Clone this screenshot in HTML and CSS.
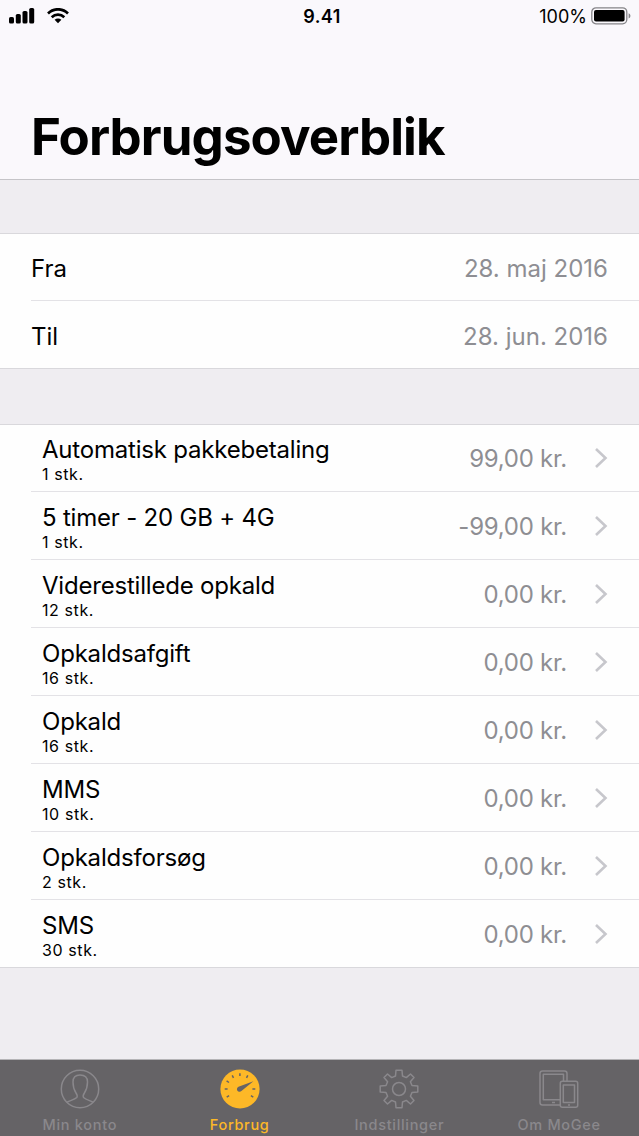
FILE: index.html
```html
<!DOCTYPE html>
<html lang="da">
<head>
    <meta charset="UTF-8">
    <meta name="viewport" content="width=device-width, initial-scale=1.0">
    <title>Forbrugsoverblik</title>
    <link rel="stylesheet" href="styles.css">
</head>
<body>
    <div class="app">
        <header class="header">
            <div class="status-bar">
                <div class="status-left">
                    <svg class="signal" width="26" height="16" viewBox="0 0 26 16">
                        <rect x="0" y="9" width="5" height="6.5" rx="1.6"/>
                        <rect x="6.8" y="6" width="5" height="9.5" rx="1.6"/>
                        <rect x="13.5" y="3" width="5" height="12.5" rx="1.6"/>
                        <rect x="20.2" y="0" width="5" height="15.5" rx="1.6"/>
                    </svg>
                    <svg class="wifi" width="22" height="16" viewBox="0 0 22 16">
                        <path d="M1 5.4C6.8-.1 15.2-.1 21 5.4M4.7 9.2C8.3 5.8 13.7 5.8 17.3 9.2" fill="none" stroke="#000" stroke-width="2.7"/>
                        <path d="M7.6 11.8C9.5 10.1 12.5 10.1 14.4 11.8L11 15.2Z"/>
                    </svg>
                </div>
                <div class="time">9.41</div>
                <div class="status-right">
                    <span class="percent">100%</span>
                    <svg width="41" height="18" viewBox="0 0 41 18">
                        <rect x=".8" y=".8" width="35" height="16" rx="4.2" fill="none" stroke="#858488" stroke-width="1.3"/>
                        <rect x="3" y="3" width="30.6" height="11.6" rx="2"/>
                        <path d="M37.6 6.2C40 7 40 10.6 37.6 11.4Z" fill="#858488"/>
                    </svg>
                </div>
            </div>
            <h1>Forbrugsoverblik</h1>
        </header>

        <main>
            <section class="group dates">
                <div class="row"><span>Fra</span><span class="value">28. maj 2016</span></div>
                <div class="row"><span>Til</span><span class="value">28. jun. 2016</span></div>
            </section>

            <section class="group usage">
                <div class="row">
                    <div class="info"><div class="name">Automatisk pakkebetaling</div><div class="count">1 stk.</div></div>
                    <span class="value">99,00 kr.</span>
                    <svg class="arrow" width="14" height="22" viewBox="0 0 14 22"><path d="M2 2L11.5 11L2 20"/></svg>
                </div>
                <div class="row">
                    <div class="info"><div class="name">5 timer - 20 GB + 4G</div><div class="count">1 stk.</div></div>
                    <span class="value">-99,00 kr.</span>
                    <svg class="arrow" width="14" height="22" viewBox="0 0 14 22"><path d="M2 2L11.5 11L2 20"/></svg>
                </div>
                <div class="row">
                    <div class="info"><div class="name">Viderestillede opkald</div><div class="count">12 stk.</div></div>
                    <span class="value">0,00 kr.</span>
                    <svg class="arrow" width="14" height="22" viewBox="0 0 14 22"><path d="M2 2L11.5 11L2 20"/></svg>
                </div>
                <div class="row">
                    <div class="info"><div class="name">Opkaldsafgift</div><div class="count">16 stk.</div></div>
                    <span class="value">0,00 kr.</span>
                    <svg class="arrow" width="14" height="22" viewBox="0 0 14 22"><path d="M2 2L11.5 11L2 20"/></svg>
                </div>
                <div class="row">
                    <div class="info"><div class="name">Opkald</div><div class="count">16 stk.</div></div>
                    <span class="value">0,00 kr.</span>
                    <svg class="arrow" width="14" height="22" viewBox="0 0 14 22"><path d="M2 2L11.5 11L2 20"/></svg>
                </div>
                <div class="row">
                    <div class="info"><div class="name">MMS</div><div class="count">10 stk.</div></div>
                    <span class="value">0,00 kr.</span>
                    <svg class="arrow" width="14" height="22" viewBox="0 0 14 22"><path d="M2 2L11.5 11L2 20"/></svg>
                </div>
                <div class="row">
                    <div class="info"><div class="name">Opkaldsforsøg</div><div class="count">2 stk.</div></div>
                    <span class="value">0,00 kr.</span>
                    <svg class="arrow" width="14" height="22" viewBox="0 0 14 22"><path d="M2 2L11.5 11L2 20"/></svg>
                </div>
                <div class="row">
                    <div class="info"><div class="name">SMS</div><div class="count">30 stk.</div></div>
                    <span class="value">0,00 kr.</span>
                    <svg class="arrow" width="14" height="22" viewBox="0 0 14 22"><path d="M2 2L11.5 11L2 20"/></svg>
                </div>
            </section>
        </main>

        <nav class="tab-bar">
            <div class="tab">
                <svg class="icon" width="40" height="40" viewBox="0 0 40 40">
                    <circle cx="20" cy="20" r="18.7"/>
                    <path d="M6.8 33.3C8.5 31.8 14.5 31 16.8 28.5C17.8 27 17 25.5 16 24C14.4 21.5 13 17.5 13 13C13 8.5 15.5 6 20 6C24.5 6 27.5 8.5 27.5 13C27.5 17.5 26 21.5 24.4 24C23.4 25.5 22.6 27 23.6 28.5C26 31 31.5 31.8 33.2 33.3"/>
                </svg>
                <span>Min konto</span>
            </div>
            <div class="tab active">
                <svg width="40" height="40" viewBox="0 0 40 40">
                    <circle cx="20" cy="20" r="19.6" fill="#fdb827"/>
                    <path d="M19.9 4.2V7M12.2 6.3L13.5 8.8M27.8 6.3L26.5 8.8M6.6 11.9L9 13.5M4.7 20H7.6M32.4 20H35.3M6.7 28.1L9.1 26.7M33.3 28.1L30.9 26.7" fill="none" stroke="#656366" stroke-width="1.5"/>
                    <path d="M33.4 12.2L18.5 17.8A2.6 2.6 0 1 0 21.4 22Z" fill="#656366"/>
                </svg>
                <span>Forbrug</span>
            </div>
            <div class="tab">
                <svg class="icon" width="40" height="40" viewBox="0 0 40 40">
                    <path d="M17 1.2H23L23.5 7L27.3 8.6L31.5 5L35 8.5L31.4 12.7L33 16.5L38.8 17V23L33 23.5L31.4 27.3L35 31.5L31.5 35L27.3 31.4L23.5 33L23 38.8H17L16.5 33L12.7 31.4L8.5 35L5 31.5L8.6 27.3L7 23.5L1.2 23V17L7 16.5L8.6 12.7L5 8.5L8.5 5L12.7 8.6L16.5 7Z"/>
                    <circle cx="20" cy="20" r="6.5"/>
                </svg>
                <span>Indstillinger</span>
            </div>
            <div class="tab">
                <svg class="icon" width="40" height="40" viewBox="0 0 40 40">
                    <path d="M28 12V4.5Q28 2 25.5 2H3.5Q1 2 1 4.5V33.5Q1 36 3.5 36H21M24.5 12V5.2H4.3V30.8H21M13 33.5H16"/>
                    <rect x="21.3" y="12.3" width="17.4" height="26" rx="2"/>
                    <path d="M24.3 16H35.5V33.5H24.3ZM29 36H31"/>
                </svg>
                <span>Om MoGee</span>
            </div>
        </nav>
    </div>
</body>
</html>
```
FILE: styles.css
```css
* {
    box-sizing: border-box;
}

body {
    margin: 0;
    font-family: 'Inter', 'Liberation Sans', sans-serif;
    background: #efedf1;
    color: #000;
}

.app {
    display: flex;
    flex-direction: column;
    width: 639px;
    height: 1136px;
}

.header {
    height: 180px;
    background: #faf8fc;
    border-bottom: 1px solid #c5c4c8;
}

.status-bar {
    display: grid;
    grid-template-columns: 1fr auto 1fr;
    align-items: center;
    height: 32px;
    padding: 0 7px 0 9px;
    font-size: 18px;
}

.status-left {
    display: flex;
    gap: 12px;
}

.time {
    font-weight: 600;
    letter-spacing: 0.4px;
    padding-left: 3px;
}

.status-right {
    display: flex;
    justify-content: flex-end;
    align-items: center;
    gap: 4px;
}

h1 {
    margin: 74px 0 0 31px;
    font-size: 51px;
    line-height: 61px;
    font-weight: 700;
    letter-spacing: -0.9px;
}

main {
    flex: 1;
}

.group {
    background: #fefefe;
    border-top: 1px solid #d9d8dc;
    border-bottom: 1px solid #d9d8dc;
    padding-left: 31px;
    font-size: 24px;
}

.dates {
    margin-top: 53px;
}

.row {
    display: flex;
    align-items: center;
    height: 68px;
    padding-right: 31px;
    border-bottom: 1px solid #e3e2e6;
}

.row:first-child {
    height: 67px;
}

.row:last-child {
    height: 67px;
    border-bottom: none;
}

.dates .row {
    justify-content: space-between;
    padding-top: 2px;
}

.dates .row:last-child {
    padding-top: 3px;
}

.value {
    color: #8e8e93;
}

.usage {
    margin-top: 55px;
}

.usage .row {
    padding-left: 11px;
}

.usage .value {
    padding-top: 1px;
    letter-spacing: -0.25px;
}

.info {
    flex: 1;
    padding-top: 3px;
}

.name {
    line-height: 29px;
    letter-spacing: -0.2px;
}

.count {
    font-size: 16px;
    line-height: 20px;
    letter-spacing: 0.6px;
}

.arrow {
    margin-left: 27px;
    fill: none;
    stroke: #c7c7cc;
    stroke-width: 2.6;
}

.tab-bar {
    display: flex;
    height: 77px;
    background: #656366;
    border-top: 1px solid #b5b4b7;
}

.tab {
    flex: 1;
    display: flex;
    flex-direction: column;
    align-items: center;
    padding-top: 9px;
    font-size: 14.5px;
    line-height: 18px;
    font-weight: 500;
    letter-spacing: 0.7px;
    color: #8a888c;
}

.tab span {
    margin-top: 7px;
}

.active {
    color: #fdb827;
}

.icon {
    fill: none;
    stroke: #8a888c;
    stroke-width: 1.5;
    stroke-linejoin: round;
}
```
